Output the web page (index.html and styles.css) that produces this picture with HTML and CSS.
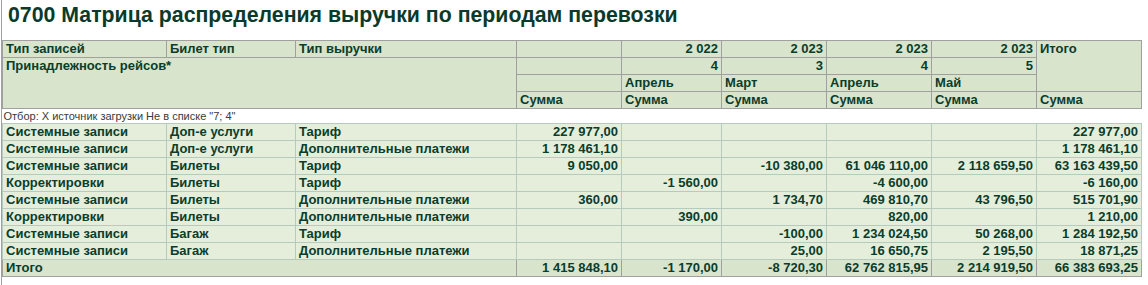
FILE: index.html
```html
<!DOCTYPE html>
<html lang="ru">
<head>
<meta charset="utf-8">
<title>0700 Матрица распределения выручки</title>
<link rel="stylesheet" href="styles.css">
</head>
<body>
<div class="page">
  <h1 class="title">0700 Матрица распределения выручки по периодам перевозки</h1>
  <table class="report">
    <colgroup>
      <col class="w-type"><col class="w-ticket"><col class="w-rev">
      <col class="w-num"><col class="w-narrow"><col class="w-num"><col class="w-num"><col class="w-num"><col class="w-num">
    </colgroup>
    <thead>
      <tr>
        <th>Тип записей</th><th>Билет тип</th><th>Тип выручки</th>
        <th></th><th class="r">2 022</th><th class="r">2 023</th><th class="r">2 023</th><th class="r">2 023</th>
        <th rowspan="3" class="top">Итого</th>
      </tr>
      <tr>
        <th colspan="3" rowspan="3" class="top">Принадлежность рейсов*</th>
        <th></th><th class="r">4</th><th class="r">3</th><th class="r">4</th><th class="r">5</th>
      </tr>
      <tr>
        <th></th><th>Апрель</th><th>Март</th><th>Апрель</th><th>Май</th>
      </tr>
      <tr>
        <th>Сумма</th><th>Сумма</th><th>Сумма</th><th>Сумма</th><th>Сумма</th><th>Сумма</th>
      </tr>
    </thead>
    <tbody>
      <tr class="filter"><td colspan="9">Отбор: Х источник загрузки Не в списке "7; 4"</td></tr>
      <tr><td>Системные записи</td><td>Доп-е услуги</td><td>Тариф</td><td class="r">227 977,00</td><td></td><td></td><td></td><td></td><td class="r">227 977,00</td></tr>
      <tr><td>Системные записи</td><td>Доп-е услуги</td><td>Дополнительные платежи</td><td class="r">1 178 461,10</td><td></td><td></td><td></td><td></td><td class="r">1 178 461,10</td></tr>
      <tr><td>Системные записи</td><td>Билеты</td><td>Тариф</td><td class="r">9 050,00</td><td></td><td class="r">-10 380,00</td><td class="r">61 046 110,00</td><td class="r">2 118 659,50</td><td class="r">63 163 439,50</td></tr>
      <tr><td>Корректировки</td><td>Билеты</td><td>Тариф</td><td></td><td class="r">-1 560,00</td><td></td><td class="r">-4 600,00</td><td></td><td class="r">-6 160,00</td></tr>
      <tr><td>Системные записи</td><td>Билеты</td><td>Дополнительные платежи</td><td class="r">360,00</td><td></td><td class="r">1 734,70</td><td class="r">469 810,70</td><td class="r">43 796,50</td><td class="r">515 701,90</td></tr>
      <tr><td>Корректировки</td><td>Билеты</td><td>Дополнительные платежи</td><td></td><td class="r">390,00</td><td></td><td class="r">820,00</td><td></td><td class="r">1 210,00</td></tr>
      <tr><td>Системные записи</td><td>Багаж</td><td>Тариф</td><td></td><td></td><td class="r">-100,00</td><td class="r">1 234 024,50</td><td class="r">50 268,00</td><td class="r">1 284 192,50</td></tr>
      <tr><td>Системные записи</td><td>Багаж</td><td>Дополнительные платежи</td><td></td><td></td><td class="r">25,00</td><td class="r">16 650,75</td><td class="r">2 195,50</td><td class="r">18 871,25</td></tr>
    </tbody>
    <tfoot>
      <tr><td colspan="3">Итого</td><td class="r">1 415 848,10</td><td class="r">-1 170,00</td><td class="r">-8 720,30</td><td class="r">62 762 815,95</td><td class="r">2 214 919,50</td><td class="r">66 383 693,25</td></tr>
    </tfoot>
  </table>
</div>
</body>
</html>
```
FILE: styles.css
```css
html, body {
  margin: 0;
  padding: 0;
  background: #ffffff;
}

.page {
  margin-left: 1px;
  border-left: 1px solid #a0a0a0;
  min-height: 285px;
  font-family: "Liberation Sans", Arial, sans-serif;
  color: #0a3d2b;
}

.title {
  margin: 0;
  padding: 2px 0 0 6px;
  height: 40px;
  box-sizing: border-box;
  font-size: 21.3px;
  line-height: 26px;
  font-weight: bold;
  color: #0a3a2b;
}

.report {
  border-collapse: collapse;
  table-layout: fixed;
  width: 1140px;
  font-size: 13px;
  font-weight: bold;
}

.w-type { width: 164px; }
.w-ticket { width: 129px; }
.w-rev { width: 221px; }
.w-num { width: 105px; }
.w-narrow { width: 100px; }

.report th,
.report td {
  padding: 0 3px;
  line-height: 16px;
  height: 16px;
  white-space: nowrap;
  overflow: hidden;
  text-align: left;
  vertical-align: middle;
}

.report th {
  background: #d8e4cb;
  border: 1px solid #a0a0a0;
  font-weight: bold;
}

.report th.top {
  vertical-align: top;
}

.report .r {
  text-align: right;
}

.report tbody td {
  background: #e4eedb;
  border: 1px solid #b5cbbd;
}

.report tbody tr.filter td {
  background: #ffffff;
  border-left: none;
  border-right: none;
  font-size: 11px;
  font-weight: normal;
  line-height: 14px;
  height: 14px;
  color: #3a3a3a;
  padding-left: 1px;
}

.report tfoot td {
  background: #d8e4cb;
  border: 1px solid #a0a0a0;
}
```
